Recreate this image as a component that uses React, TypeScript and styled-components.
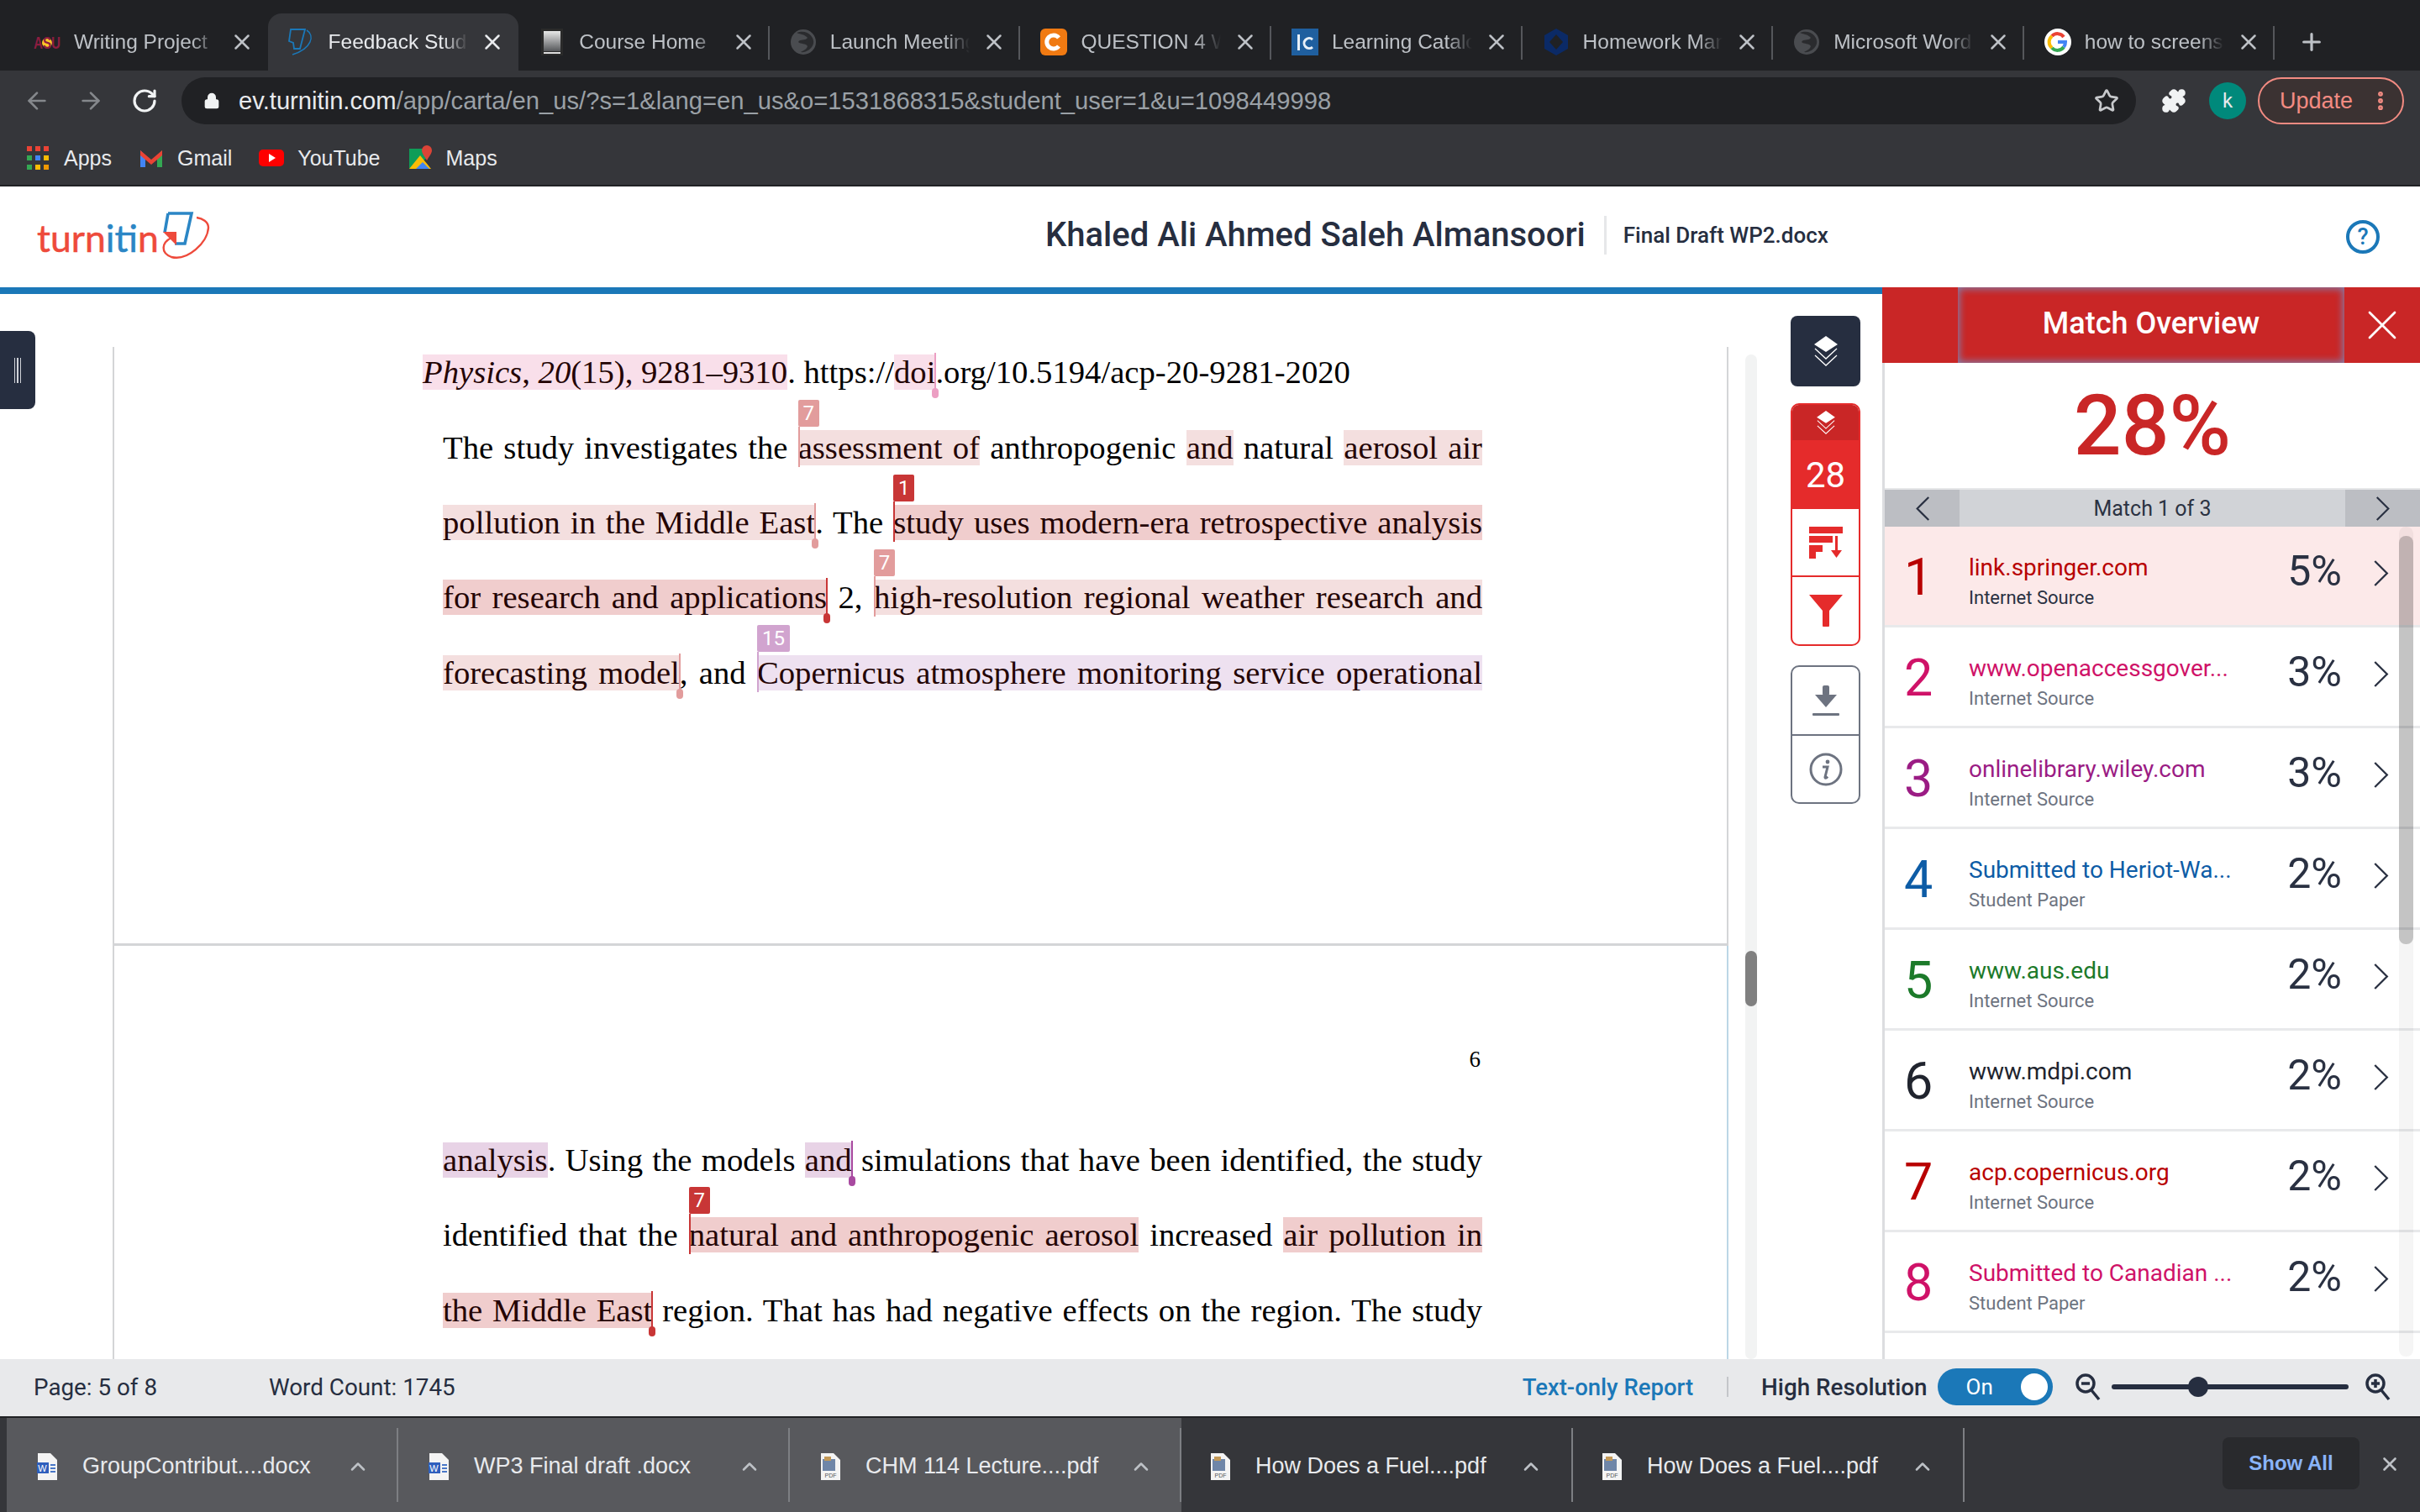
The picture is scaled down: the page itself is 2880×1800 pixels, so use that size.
import React from 'react';
import styled, { createGlobalStyle } from 'styled-components';
import { ChevronUp, Plus, RotateCw, ArrowLeft, ArrowRight, Star, Puzzle, X, Lock, EllipsisVertical } from 'lucide-react';

const GlobalStyle = createGlobalStyle`
    html, body {
        margin: 0;
        padding: 0;
        background: #fff;
    }

    * {
        box-sizing: border-box;
    }
`;

const StyledApp = styled.div`
    width: 2880px;
    height: 1800px;
    display: flex;
    flex-direction: column;
    overflow: hidden;
    font-family: Roboto, 'Liberation Sans', sans-serif;
`;

/* browser chrome */
const TabStrip = styled.div`
    height: 84px;
    padding: 16px 0 0 20px;
    display: flex;
    background: #202124;
`;

const StyledTab = styled.div<{ $active?: boolean; $sep?: boolean }>`
    position: relative;
    width: 298.6px;
    height: 68px;
    padding: 0 16px 0 24px;
    display: flex;
    align-items: center;
    color: ${(p) => (p.$active ? '#e8eaed' : '#bdc1c6')};
    background: ${(p) => (p.$active ? '#35363a' : 'transparent')};
    border-radius: 16px 16px 0 0;

    &:first-child {
        padding-left: 20px;
    }

    &::after {
        content: '';
        display: ${(p) => (p.$sep ? 'block' : 'none')};
        position: absolute;
        right: 0;
        top: 15px;
        width: 2px;
        height: 40px;
        background: #55575b;
    }
`;

const Favicon = styled.svg`
    flex: none;
    width: 32px;
    height: 32px;
    margin-right: 16px;
`;

const TabTitle = styled.span`
    flex: 1;
    margin-right: 14px;
    overflow: hidden;
    white-space: nowrap;
    font-family: 'Liberation Sans', sans-serif;
    font-size: 24.5px;
    mask-image: linear-gradient(90deg, #000 82%, transparent 100%);
`;

const NewTab = styled.div`
    margin: 0 0 0 28px;
    height: 68px;
    display: flex;
    align-items: center;
    color: #bdc1c6;
`;

const Toolbar = styled.div`
    height: 82px;
    padding: 8px 17px 0 28px;
    display: flex;
    align-items: flex-start;
    background: #35363a;
    color: #d6d8da;
`;

const NavIcons = styled.div`
    width: 188px;
    height: 56px;
    display: flex;
    align-items: center;
    gap: 32px;
`;

const Omnibox = styled.div`
    width: 2326px;
    height: 56px;
    padding: 0 20px 0 26px;
    display: flex;
    align-items: center;
    background: #202124;
    border-radius: 28px;
`;

const Url = styled.div`
    flex: 1;
    margin-left: 22px;
    font-family: 'Liberation Sans', sans-serif;
    font-size: 29.2px;
    white-space: nowrap;
    color: #9aa0a6;

    b {
        font-weight: 400;
        color: #e8eaed;
    }
`;

const ToolbarRight = styled.div`
    flex: 1;
    height: 56px;
    padding-left: 30px;
    display: flex;
    align-items: center;
`;

const Avatar = styled.div`
    width: 44px;
    height: 44px;
    margin: 0 14px 0 27px;
    display: flex;
    align-items: center;
    justify-content: center;
    flex: none;
    font-size: 24px;
    color: #e8eaed;
    background: #00897b;
    border-radius: 50%;
`;

const UpdatePill = styled.div`
    flex: none;
    width: 174px;
    height: 56px;
    padding: 0 12px 0 24px;
    display: flex;
    align-items: center;
    justify-content: space-between;
    font-family: 'Liberation Sans', sans-serif;
    font-size: 27px;
    color: #f28b82;
    background: #3b3232;
    border: 2px solid #f28b82;
    border-radius: 28px;
`;

const Bookmarks = styled.div`
    height: 56px;
    padding: 0 0 10px 30px;
    display: flex;
    align-items: center;
    background: #35363a;
    border-bottom: 2px solid #202124;
`;

const Bookmark = styled.div`
    margin-right: 32px;
    display: flex;
    align-items: center;
    gap: 16px;
    font-family: 'Liberation Sans', sans-serif;
    font-size: 25px;
    color: #e8eaed;
`;

const BookmarkIcon = styled.svg`
    width: 30px;
    height: 30px;
    flex: none;
`;

/* turnitin header */
const Header = styled.header`
    position: relative;
    height: 120px;
    padding: 0 44px;
    display: flex;
    align-items: center;
    justify-content: space-between;
    background: #fff;
`;

const Logo = styled.div`
    display: flex;
    align-items: center;
    font-family: Lato, sans-serif;
    font-size: 44.5px;
    color: #ee4a3b;
    -webkit-text-stroke: 0.5px #ee4a3b;

    em {
        font-style: normal;
        color: #2b86c5;
        -webkit-text-stroke: 0.5px #2b86c5;
    }

    svg {
        width: 60px;
        height: 62px;
        margin: -4px 0 0 2px;
        flex: none;
    }
`;

const HeaderCenter = styled.div`
    position: absolute;
    left: 1244px;
    top: 34px;
    display: flex;
    align-items: center;
    color: #262e40;
`;

const StudentName = styled.div`
    font-size: 40px;
    font-weight: 500;
    white-space: nowrap;
`;

const FileName = styled.div`
    margin-left: 22px;
    padding-left: 20px;
    font-size: 26px;
    font-weight: 500;
    line-height: 46px;
    white-space: nowrap;
    border-left: 3px solid #e6e7e9;
`;

const HelpIcon = styled.div`
    width: 40px;
    height: 40px;
    margin-right: 4px;
    display: flex;
    align-items: center;
    justify-content: center;
    font-size: 27px;
    font-weight: 500;
    color: #1b78b8;
    border: 4px solid #1b78b8;
    border-radius: 50%;
`;

/* document area */
const Main = styled.main`
    position: relative;
    height: 1276px;
    display: flex;
`;

const DocColumn = styled.div`
    position: relative;
    width: 2240px;
    padding-left: 134px;
    display: flex;
    border-top: 8px solid #1b78b8;
`;

const Handle = styled.div`
    position: absolute;
    left: 0;
    top: 44px;
    width: 42px;
    height: 93px;
    display: flex;
    align-items: center;
    justify-content: center;
    gap: 2px;
    background: #262e40;
    border-radius: 0 8px 8px 0;

    i {
        width: 1.5px;
        height: 30px;
        background: #cfd2d8;
    }
`;

const Pages = styled.div`
    width: 1923px;
    padding-top: 63px;
    overflow: hidden;
`;

const Page = styled.div<{ $second?: boolean }>`
    height: ${(p) => (p.$second ? '600px' : '713px')};
    padding-left: 391px;
    border-left: 2px solid #d4d5d7;
    border-right: 2px solid ${(p) => (p.$second ? '#bcd6e6' : '#d4d5d7')};
    border-bottom: ${(p) => (p.$second ? '0' : '3px solid #d4d5d7')};
    font-family: 'Liberation Serif', serif;
    font-size: 38.7px;
    color: #000;
`;

const Line = styled.div`
    width: 1237px;
    height: 89.3px;
    line-height: 89.3px;
    text-align: justify;
    text-align-last: justify;
    white-space: nowrap;
`;

const CiteLine = styled.div`
    height: 75.75px;
    margin-left: -24px;
    line-height: 61px;
    white-space: nowrap;
`;

const PageNumber = styled.div`
    width: 1237px;
    padding: 117px 2px 0 0;
    height: 211px;
    text-align: right;
    font-size: 27px;
    line-height: 36px;
`;

const toneColors: Record<string, string> = {
    pink: '#f9dfea',
    light: '#f4dfdf',
    dark: '#f0cdcd',
    lilac: '#eee1f0',
    purple: '#e8d3e6',
};

const Hl = styled.span<{ $tone: string }>`
    position: relative;
    color: #240404;
    background: ${(p) => toneColors[p.$tone]};
`;

const Badge = styled.span<{ $color: string; $wide?: boolean }>`
    position: absolute;
    left: 0;
    bottom: calc(100% + 4px);
    width: ${(p) => (p.$wide ? '39px' : '25px')};
    height: 32px;
    font-family: Roboto, sans-serif;
    font-size: 24px;
    line-height: 32px;
    text-align: center;
    text-align-last: center;
    color: #fff;
    background: ${(p) => p.$color};
    border-radius: 2px;
`;

const StartRule = styled.span<{ $color: string }>`
    position: absolute;
    left: 0;
    top: -4px;
    bottom: -2px;
    width: 2px;
    background: ${(p) => p.$color};
`;

const EndRule = styled.span<{ $color: string }>`
    position: absolute;
    right: -1px;
    top: -2px;
    bottom: -2px;
    width: 2px;
    background: ${(p) => p.$color};

    &::after {
        content: '';
        position: absolute;
        left: -3px;
        bottom: -8px;
        width: 8px;
        height: 12px;
        background: ${(p) => p.$color};
        border-radius: 4px;
    }
`;

const Scrollbar = styled.div`
    width: 14px;
    margin-left: 20px;
    margin-top: 72px;
    padding-top: 710px;
    background: #f2f3f3;
    border-radius: 7px;

    i {
        display: block;
        height: 66px;
        background: #808080;
        border-radius: 7px;
    }
`;

const ToolColumn = styled.div`
    width: 83px;
    margin: 26px 0 0 40px;
    display: flex;
    flex-direction: column;
    gap: 20px;
`;

const ToolButton = styled.div`
    height: 84px;
    display: flex;
    align-items: center;
    justify-content: center;
    color: #fff;
    background: #262e40;
    border-radius: 8px;
`;

const ToolGroup = styled.div<{ $color: string; $gap?: number }>`
    margin-top: ${(p) => p.$gap ?? 0}px;
    display: flex;
    flex-direction: column;
    overflow: hidden;
    background: #fff;
    border: 2px solid ${(p) => p.$color};
    border-radius: 10px;
`;

const ToolCell = styled.div<{ $h: number; $bg?: string; $line?: string }>`
    height: ${(p) => p.$h}px;
    display: flex;
    align-items: center;
    justify-content: center;
    font-size: 42px;
    color: #fff;
    background: ${(p) => p.$bg ?? 'transparent'};
    border-bottom: ${(p) => (p.$line ? `2px solid ${p.$line}` : '0')};
`;

/* match panel */
const Panel = styled.aside`
    width: 640px;
    display: flex;
    flex-direction: column;
    position: relative;
    border-left: 3px solid #dcdde0;
`;

const PanelHead = styled.div`
    height: 90px;
    margin-left: -3px;
    display: flex;
    background: #c92626;
`;

const PanelTitle = styled.div`
    width: 460px;
    margin-left: 90px;
    padding-bottom: 4px;
    display: flex;
    align-items: center;
    justify-content: center;
    font-size: 36px;
    font-weight: 500;
    color: #fff;
    box-shadow: inset 0 0 8px 2px rgba(120, 140, 190, 0.85);
`;

const PanelClose = styled.div`
    flex: 1;
    display: flex;
    align-items: center;
    justify-content: center;
    color: #fff;
`;

const Score = styled.div`
    height: 149px;
    display: flex;
    align-items: center;
    justify-content: center;
    font-size: 100px;
    font-weight: 500;
    color: #c92626;
`;

const MatchBar = styled.div`
    height: 46px;
    display: flex;
    align-items: stretch;
    font-size: 25px;
    color: #2b3242;
    background: #d1d3d7;
    border-top: 2px solid #e6e7e9;
`;

const MatchArrow = styled.div`
    width: 89px;
    display: flex;
    align-items: center;
    justify-content: center;
    background: #bcbec3;
`;

const MatchLabel = styled.div`
    flex: 1;
    display: flex;
    align-items: center;
    justify-content: center;
`;

const Sources = styled.div`
    position: relative;
    flex: 1;
`;

const SourceRow = styled.div<{ $active?: boolean }>`
    height: 120px;
    padding: 0 0 0 23px;
    display: flex;
    align-items: center;
    background: ${(p) => (p.$active ? '#fce9e9' : '#fff')};
    border-bottom: 3px solid #e8e9eb;
`;

const SourceNumber = styled.div<{ $color: string }>`
    width: 77px;
    margin-top: 2px;
    font-size: 61px;
    line-height: 62px;
    color: ${(p) => p.$color};
`;

const SourceText = styled.div`
    width: 370px;
    margin-top: 13px;
    display: flex;
    flex-direction: column;
    gap: 5px;
`;

const SourceTitle = styled.div<{ $color: string }>`
    font-size: 28px;
    line-height: 34px;
    white-space: nowrap;
    color: ${(p) => p.$color};
`;

const SourceKind = styled.div<{ $dark?: boolean }>`
    font-size: 22px;
    line-height: 28px;
    color: ${(p) => (p.$dark ? '#2a3142' : '#6d7380')};
`;

const SourcePercent = styled.div`
    width: 74px;
    margin-top: -12px;
    text-align: right;
    font-size: 50px;
    color: #2a3142;
`;

const SourceChevron = styled.div`
    margin: -6px 0 0 38px;
    display: flex;
`;

const SourcesTrack = styled.div`
    position: absolute;
    right: 8px;
    top: 0;
    bottom: 3px;
    width: 17px;
    padding-top: 11px;
    background: rgba(0, 0, 0, 0.04);
    border-radius: 8px;

    i {
        display: block;
        height: 486px;
        background: rgba(0, 0, 0, 0.2);
        border-radius: 8px;
    }
`;

/* status bar */
const StatusBar = styled.div`
    height: 70px;
    padding: 0 0 2px 40px;
    display: flex;
    align-items: center;
    font-size: 27.8px;
    color: #262e40;
    background: #e8e9eb;
    border-bottom: 2px solid #202124;
`;

const PageCount = styled.div`
    width: 280px;
`;

const ReportLink = styled.div`
    margin-left: 1270px;
    font-size: 27.5px;
    font-weight: 500;
    color: #1b78b8;
`;

const StatusDivider = styled.div`
    width: 2px;
    height: 24px;
    margin: 0 39px 0 40px;
    background: #c4c6ca;
`;

const ResolutionLabel = styled.div`
    margin-right: 12px;
    font-weight: 500;
`;

const Toggle = styled.div`
    width: 137px;
    height: 44px;
    padding: 0 6px 0 34px;
    display: flex;
    align-items: center;
    justify-content: space-between;
    font-size: 26px;
    color: #fff;
    background: #1b78b8;
    border-radius: 22px;

    i {
        width: 32px;
        height: 32px;
        background: #fff;
        border-radius: 50%;
    }
`;

const ZoomControl = styled.div`
    margin-left: 26px;
    display: flex;
    align-items: center;
    gap: 12px;

    svg:last-child {
        margin-left: 7px;
    }
`;

const Slider = styled.div`
    position: relative;
    width: 282px;
    height: 6px;
    background: #262e40;
    border-radius: 3px;

    i {
        position: absolute;
        left: 91px;
        top: -9px;
        width: 24px;
        height: 24px;
        background: #262e40;
        border-radius: 50%;
    }
`;

/* downloads */
const DownloadBar = styled.div`
    flex: 1;
    position: relative;
    display: flex;
    background: #35363a;
`;

const Lit = styled.div`
    padding-left: 8px;
    display: flex;
    background: linear-gradient(90deg, #35363a 8px, #58595d 8px);
`;

const DownloadItem = styled.div<{ $last?: boolean }>`
    position: relative;
    width: 466px;
    height: 112px;
    padding: 3px 0 0 ${(p) => (p.$last ? '34px' : '36px')};
    display: flex;
    align-items: center;
    font-family: 'Liberation Sans', sans-serif;
    font-size: 27px;
    color: #e8eaed;

    &::after {
        content: '';
        position: absolute;
        right: 0;
        top: 12px;
        width: 2px;
        height: 88px;
        background: #7d7f83;
    }
`;

const FileIcon = styled.svg`
    flex: none;
    width: 26px;
    height: 32px;
    margin-right: 28px;
`;

const DownloadName = styled.span`
    width: 314px;
    white-space: nowrap;
`;

const ShowAll = styled.div`
    position: absolute;
    left: 2645px;
    top: 23px;
    width: 163px;
    height: 62px;
    display: flex;
    align-items: center;
    justify-content: center;
    font-family: 'Liberation Sans', sans-serif;
    font-size: 24px;
    font-weight: 700;
    color: #8ab4f8;
    background: #292a2d;
    border-radius: 8px;
`;

const DownloadClose = styled.div`
    position: absolute;
    left: 2831px;
    top: 42px;
    display: flex;
    color: #bdc1c6;
`;

const LayersIcon: React.FC<{ w: number; h: number }> = ({ w, h }) => (
    <svg width={w} height={h} viewBox="0 0 28 36" fill="none" stroke="#fff" strokeWidth="1.3">
        <path d="M14 0 L28 10 L14 19 L0 10 Z" fill="#fff" stroke="none" />
        <path d="M1 15 L14 27 L27 15" />
        <path d="M1 23 L14 35 L27 23" />
    </svg>
);

const Chevron: React.FC<{ left?: boolean; h?: number }> = ({ left, h = 31 }) => (
    <svg width="18" height={h} viewBox="0 0 18 32" fill="none" stroke="#2a3142" strokeWidth="2.4">
        <path d={left ? 'M17 1 L2 16 L17 31' : 'M1 1 L16 16 L1 31'} />
    </svg>
);

const Globe = () => (
    <Favicon viewBox="0 0 32 32">
        <circle cx="16" cy="16" r="15" fill="#4a4c50" />
        <path d="M8 5c5 2 10 2 13 6-3 4-9 1-11 5 3 3 9 1 11 5-1 4-5 5-8 7 5 1 13-3 15-10C30 10 20 0 8 5z" fill="#2a2b2e" />
    </Favicon>
);

const FileDoc: React.FC<{ pdf?: boolean }> = ({ pdf }) => (
    <FileIcon viewBox="0 0 26 32">
        <path d="M1 0h15l8 8v24H1z" fill="#f4f4f4" />
        {pdf ? (
            <>
                <rect x="3" y="7" width="15" height="14" fill="#6f86a8" />
                <rect x="5" y="4" width="8" height="5" fill="#c49a58" />
                <text x="12.5" y="29" fontSize="7" fontFamily="Liberation Sans" textAnchor="middle" fill="#555">
                    PDF
                </text>
            </>
        ) : (
            <>
                <rect x="-1" y="11" width="15" height="13" fill="#2f5fbd" />
                <text x="6.5" y="22" fontSize="11" fontFamily="Liberation Sans" textAnchor="middle" fill="#fff">
                    W
                </text>
                <rect x="16" y="13" width="6" height="2" fill="#4a78c8" />
                <rect x="16" y="17" width="6" height="2" fill="#4a78c8" />
                <rect x="16" y="21" width="6" height="2" fill="#4a78c8" />
            </>
        )}
    </FileIcon>
);

const tabs = [
    {
        title: 'Writing Project',
        icon: (
            <Favicon viewBox="0 0 32 32">
                <circle cx="16" cy="17" r="6" fill="#ffc627" />
                <text x="0" y="24" fontSize="20" fontWeight="700" fontFamily="Liberation Sans" textLength="32" lengthAdjust="spacingAndGlyphs" fill="#8c1d40">
                    ASU
                </text>
            </Favicon>
        ),
    },
    {
        title: 'Feedback Studio',
        active: true,
        icon: (
            <Favicon viewBox="0 0 32 32" fill="none" stroke="#1b78b8" strokeWidth="1.8">
                <path d="M3 1h17l-6 23H7l-1-7-5-2z" />
                <path d="M22 2c10 6 6 22-17 29" strokeWidth="1.5" />
            </Favicon>
        ),
    },
    {
        title: 'Course Home',
        sep: true,
        icon: (
            <Favicon viewBox="0 0 32 32">
                <defs>
                    <linearGradient id="book" x1="0" x2="0" y1="0" y2="1">
                        <stop offset="0" stopColor="#e8e8e8" />
                        <stop offset="1" stopColor="#55575a" />
                    </linearGradient>
                </defs>
                <rect x="3" width="26" height="32" fill="#2a2a2a" />
                <rect x="6" y="3" width="20" height="24" fill="url(#book)" />
                <rect x="6" y="28" width="20" height="2" fill="#dedede" />
            </Favicon>
        ),
    },
    { title: 'Launch Meeting', sep: true, icon: <Globe /> },
    {
        title: 'QUESTION 4 WP',
        sep: true,
        icon: (
            <Favicon viewBox="0 0 32 32">
                <rect width="32" height="32" rx="6" fill="#f07a12" />
                <path d="M22 11a8 8 0 1 0 0 10" fill="none" stroke="#fff" strokeWidth="5" />
            </Favicon>
        ),
    },
    {
        title: 'Learning Catalog',
        sep: true,
        icon: (
            <Favicon viewBox="0 0 32 32">
                <rect width="32" height="32" fill="#1f5f9f" />
                <rect x="7" y="7" width="3" height="19" fill="#e8f0f8" />
                <path d="M25 13a6 6 0 1 0 0 9" fill="none" stroke="#e8f0f8" strokeWidth="3" />
            </Favicon>
        ),
    },
    {
        title: 'Homework Man',
        sep: true,
        icon: (
            <Favicon viewBox="0 0 32 32">
                <path d="M16 0 30 8v16L16 32 2 24V8z" fill="#0b2a66" />
                <path d="M16 7 24 16 16 25 8 16z" fill="#202124" />
            </Favicon>
        ),
    },
    { title: 'Microsoft Word', sep: true, icon: <Globe /> },
    {
        title: 'how to screensh',
        sep: true,
        icon: (
            <Favicon viewBox="0 0 32 32">
                <circle cx="16" cy="16" r="16" fill="#fff" />
                <path d="M23 10a9 9 0 0 0-14-1" fill="none" stroke="#ea4335" strokeWidth="4" />
                <path d="M9 9a9 9 0 0 0 0 14" fill="none" stroke="#fbbc05" strokeWidth="4" />
                <path d="M9 23a9 9 0 0 0 14-1" fill="none" stroke="#34a853" strokeWidth="4" />
                <path d="M16 16h9a9 9 0 0 1-2 6" fill="none" stroke="#4285f4" strokeWidth="4" />
            </Favicon>
        ),
    },
];

const sources = [
    { title: 'link.springer.com', kind: 'Internet Source', pct: '5%', color: '#b80000' },
    { title: 'www.openaccessgover...', kind: 'Internet Source', pct: '3%', color: '#cf1268' },
    { title: 'onlinelibrary.wiley.com', kind: 'Internet Source', pct: '3%', color: '#9b1c84' },
    { title: 'Submitted to Heriot-Wa...', kind: 'Student Paper', pct: '2%', color: '#0d5ca6' },
    { title: 'www.aus.edu', kind: 'Internet Source', pct: '2%', color: '#1c7a2a' },
    { title: 'www.mdpi.com', kind: 'Internet Source', pct: '2%', color: '#20242e' },
    { title: 'acp.copernicus.org', kind: 'Internet Source', pct: '2%', color: '#b80000' },
    { title: 'Submitted to Canadian ...', kind: 'Student Paper', pct: '2%', color: '#cf1268' },
];

const downloads = [
    { name: 'GroupContribut....docx' },
    { name: 'WP3 Final draft .docx' },
    { name: 'CHM 114 Lecture....pdf', pdf: true },
];

const RED_SOFT = '#e29c9c';
const RED_HARD = '#c83636';

export default function App() {
    return (
        <StyledApp>
            <GlobalStyle />

            <TabStrip>
                {tabs.map((tab) => (
                    <StyledTab key={tab.title} $active={tab.active} $sep={tab.sep}>
                        {tab.icon}
                        <TabTitle>{tab.title}</TabTitle>
                        <X size={30} strokeWidth={2} />
                    </StyledTab>
                ))}
                <NewTab>
                    <Plus size={32} strokeWidth={2.4} />
                </NewTab>
            </TabStrip>

            <Toolbar>
                <NavIcons>
                    <ArrowLeft size={32} color="#85888c" strokeWidth={2} />
                    <ArrowRight size={32} color="#85888c" strokeWidth={2} />
                    <RotateCw size={32} color="#f1f3f4" strokeWidth={2.4} />
                </NavIcons>
                <Omnibox>
                    <Lock size={20} color="#f1f3f4" fill="#f1f3f4" />
                    <Url>
                        <b>ev.turnitin.com</b>/app/carta/en_us/?s=1&amp;lang=en_us&amp;o=1531868315&amp;student_user=1&amp;u=1098449998
                    </Url>
                    <Star size={30} color="#c7c9cc" strokeWidth={2.2} />
                </Omnibox>
                <ToolbarRight>
                    <Puzzle size={30} color="#f1f3f4" fill="#f1f3f4" />
                    <Avatar>k</Avatar>
                    <UpdatePill>
                        Update
                        <EllipsisVertical size={28} strokeWidth={3} />
                    </UpdatePill>
                </ToolbarRight>
            </Toolbar>

            <Bookmarks>
                <Bookmark>
                    <BookmarkIcon viewBox="0 0 30 30">
                        <rect x="2" y="1" width="6" height="6" fill="#ea4335" />
                        <rect x="12" y="1" width="6" height="6" fill="#ea4335" />
                        <rect x="22" y="1" width="6" height="6" fill="#ea4335" />
                        <rect x="2" y="12" width="6" height="6" fill="#34a853" />
                        <rect x="12" y="12" width="6" height="6" fill="#4285f4" />
                        <rect x="22" y="12" width="6" height="6" fill="#fbbc05" />
                        <rect x="2" y="23" width="6" height="6" fill="#34a853" />
                        <rect x="12" y="23" width="6" height="6" fill="#fbbc05" />
                        <rect x="22" y="23" width="6" height="6" fill="#f29900" />
                    </BookmarkIcon>
                    Apps
                </Bookmark>
                <Bookmark>
                    <BookmarkIcon viewBox="0 0 30 30">
                        <path d="M2 6v20h6V12z" fill="#4285f4" />
                        <path d="M28 6v20h-6V12z" fill="#34a853" />
                        <path d="M2 6l13 11L28 6v6L15 23 2 12z" fill="#ea4335" />
                    </BookmarkIcon>
                    Gmail
                </Bookmark>
                <Bookmark>
                    <BookmarkIcon viewBox="0 0 30 30">
                        <rect y="5" width="30" height="20" rx="5" fill="#f00" />
                        <path d="M12 10l8 5-8 5z" fill="#fff" />
                    </BookmarkIcon>
                    YouTube
                </Bookmark>
                <Bookmark>
                    <BookmarkIcon viewBox="0 0 30 30">
                        <path d="M2 4h20v12L2 28z" fill="#0f9d58" />
                        <path d="M2 28 15 12l13 16z" fill="#fbbc05" />
                        <path d="M10 28l8-8 8 8z" fill="#4285f4" />
                        <path d="M23 0a6 6 0 0 1 6 6c0 4-4 8-6 12-2-4-6-8-6-12a6 6 0 0 1 6-6z" fill="#db4437" />
                    </BookmarkIcon>
                    Maps
                </Bookmark>
            </Bookmarks>

            <Header>
                <Logo>
                    <span>
                        turn<em>it</em>in
                    </span>
                    <svg viewBox="190 250 60 62" fill="none">
                        <path d="M199 255 H227 L219 291 H207 M199 255 L195 278" stroke="#2b86c5" strokeWidth="3.6" />
                        <path d="M193 277 H209 V293 Z" fill="#ee4a3b" />
                        <path d="M203 284 C191 290 190 302 203 307 C222 312 246 290 247 272 C247 265 240 261 233 260" stroke="#ee4a3b" strokeWidth="2.4" />
                    </svg>
                </Logo>
                <HeaderCenter>
                    <StudentName>Khaled Ali Ahmed Saleh Almansoori</StudentName>
                    <FileName>Final Draft WP2.docx</FileName>
                </HeaderCenter>
                <HelpIcon>?</HelpIcon>
            </Header>

            <Main>
                <DocColumn>
                    <Handle>
                        <i />
                        <i />
                        <i />
                    </Handle>

                    <Pages>
                        <Page>
                            <CiteLine>
                                <Hl $tone="pink">
                                    <i>Physics</i>, <i>20</i>(15), 9281–9310
                                </Hl>
                                . https://
                                <Hl $tone="pink">
                                    doi
                                    <EndRule $color="#ec9fc3" />
                                </Hl>
                                .org/10.5194/acp-20-9281-2020
                            </CiteLine>
                            <Line>
                                The study investigates the{' '}
                                <Hl $tone="light">
                                    <Badge $color={RED_SOFT}>7</Badge>
                                    <StartRule $color={RED_SOFT} />
                                    assessment of
                                </Hl>{' '}
                                anthropogenic <Hl $tone="light">and</Hl> natural <Hl $tone="light">aerosol air</Hl>
                            </Line>
                            <Line>
                                <Hl $tone="light">
                                    pollution in the Middle East
                                    <EndRule $color={RED_SOFT} />
                                </Hl>
                                . The{' '}
                                <Hl $tone="dark">
                                    <Badge $color={RED_HARD}>1</Badge>
                                    <StartRule $color={RED_HARD} />
                                    study uses modern-era retrospective analysis
                                </Hl>
                            </Line>
                            <Line>
                                <Hl $tone="dark">
                                    for research and applications
                                    <EndRule $color={RED_HARD} />
                                </Hl>{' '}
                                2,{' '}
                                <Hl $tone="light">
                                    <Badge $color={RED_SOFT}>7</Badge>
                                    <StartRule $color={RED_SOFT} />
                                    high-resolution regional weather research and
                                </Hl>
                            </Line>
                            <Line>
                                <Hl $tone="light">
                                    forecasting model
                                    <EndRule $color={RED_SOFT} />
                                </Hl>
                                , and{' '}
                                <Hl $tone="lilac">
                                    <Badge $color="#d1a4cf" $wide>
                                        15
                                    </Badge>
                                    <StartRule $color="#d1a4cf" />
                                    Copernicus atmosphere monitoring service operational
                                </Hl>
                            </Line>
                        </Page>

                        <Page $second>
                            <PageNumber>6</PageNumber>
                            <Line>
                                <Hl $tone="purple">analysis</Hl>. Using the models{' '}
                                <Hl $tone="purple">
                                    and
                                    <EndRule $color="#a84aa0" />
                                </Hl>{' '}
                                simulations that have been identified, the study
                            </Line>
                            <Line>
                                identified that the{' '}
                                <Hl $tone="dark">
                                    <Badge $color={RED_HARD}>7</Badge>
                                    <StartRule $color={RED_HARD} />
                                    natural and anthropogenic aerosol
                                </Hl>{' '}
                                increased <Hl $tone="dark">air pollution in</Hl>
                            </Line>
                            <Line>
                                <Hl $tone="dark">
                                    the Middle East
                                    <EndRule $color={RED_HARD} />
                                </Hl>{' '}
                                region. That has had negative effects on the region. The study
                            </Line>
                        </Page>
                    </Pages>

                    <Scrollbar>
                        <i />
                    </Scrollbar>

                    <ToolColumn>
                        <ToolButton>
                            <LayersIcon w={28} h={36} />
                        </ToolButton>
                        <ToolGroup $color="#e52b2b">
                            <ToolCell $h={42} $bg="#c92626">
                                <LayersIcon w={22} h={28} />
                            </ToolCell>
                            <ToolCell $h={82} $bg="#e52b2b">
                                28
                            </ToolCell>
                            <ToolCell $h={81} $line="#e52b2b">
                                <svg width="42" height="38" viewBox="0 0 42 38" fill="#e52b2b">
                                    <rect x="1" y="0" width="40" height="8" />
                                    <rect x="1" y="11" width="28" height="8" />
                                    <rect x="1" y="22" width="16" height="8" />
                                    <rect x="1" y="30" width="8" height="8" />
                                    <rect x="32" y="11" width="3" height="20" />
                                    <path d="M27 28h13l-6.5 9z" />
                                </svg>
                            </ToolCell>
                            <ToolCell $h={80}>
                                <svg width="42" height="38" viewBox="0 0 42 38" fill="#e52b2b">
                                    <path d="M1 0h40L25 19v17a4 4 0 0 1-8 0V19z" />
                                </svg>
                            </ToolCell>
                        </ToolGroup>
                        <ToolGroup $color="#6d7380" $gap={3}>
                            <ToolCell $h={82} $line="#6d7380">
                                <svg width="32" height="36" viewBox="0 0 32 36" fill="#6d7380">
                                    <rect x="12" y="0" width="8" height="12" rx="2" />
                                    <path d="M3 11h26L16 26z" />
                                    <rect x="0" y="33" width="32" height="3" rx="1" />
                                </svg>
                            </ToolCell>
                            <ToolCell $h={79}>
                                <svg width="40" height="40" viewBox="0 0 40 40" fill="none">
                                    <circle cx="20" cy="20" r="18" stroke="#6d7380" strokeWidth="3" />
                                    <circle cx="22" cy="11" r="2.4" fill="#6d7380" />
                                    <path d="M16 17h6l-3 12c-.3 1.5 1 2 3-.5" stroke="#6d7380" strokeWidth="3" />
                                </svg>
                            </ToolCell>
                        </ToolGroup>
                    </ToolColumn>
                </DocColumn>

                <Panel>
                    <PanelHead>
                        <PanelTitle>Match Overview</PanelTitle>
                        <PanelClose>
                            <X size={60} strokeWidth={1.1} />
                        </PanelClose>
                    </PanelHead>
                    <Score>28%</Score>
                    <MatchBar>
                        <MatchArrow>
                            <Chevron left h={29} />
                        </MatchArrow>
                        <MatchLabel>Match 1 of 3</MatchLabel>
                        <MatchArrow>
                            <Chevron h={29} />
                        </MatchArrow>
                    </MatchBar>
                    <Sources>
                        {sources.map((s, i) => (
                            <SourceRow key={s.title} $active={i === 0}>
                                <SourceNumber $color={s.color}>{i + 1}</SourceNumber>
                                <SourceText>
                                    <SourceTitle $color={s.color}>{s.title}</SourceTitle>
                                    <SourceKind $dark={i === 0}>{s.kind}</SourceKind>
                                </SourceText>
                                <SourcePercent>{s.pct}</SourcePercent>
                                <SourceChevron>
                                    <Chevron />
                                </SourceChevron>
                            </SourceRow>
                        ))}
                        <SourcesTrack>
                            <i />
                        </SourcesTrack>
                    </Sources>
                </Panel>
            </Main>

            <StatusBar>
                <PageCount>Page: 5 of 8</PageCount>
                <div>Word Count: 1745</div>
                <ReportLink>Text-only Report</ReportLink>
                <StatusDivider />
                <ResolutionLabel>High Resolution</ResolutionLabel>
                <Toggle>
                    On
                    <i />
                </Toggle>
                <ZoomControl>
                    <svg width="32" height="34" viewBox="0 0 32 34" fill="none" stroke="#262e40" strokeWidth="3.5">
                        <circle cx="13" cy="13" r="10" />
                        <path d="M20 21l9 11M8 13h10" />
                    </svg>
                    <Slider>
                        <i />
                    </Slider>
                    <svg width="32" height="34" viewBox="0 0 32 34" fill="none" stroke="#262e40" strokeWidth="3.5">
                        <circle cx="13" cy="13" r="10" />
                        <path d="M20 21l9 11M8 13h10M13 8v10" />
                    </svg>
                </ZoomControl>
            </StatusBar>

            <DownloadBar>
                <Lit>
                    {downloads.map((d) => (
                        <DownloadItem key={d.name}>
                            <FileDoc pdf={d.pdf} />
                            <DownloadName>{d.name}</DownloadName>
                            <ChevronUp size={28} color="#bdc1c6" strokeWidth={2.2} />
                        </DownloadItem>
                    ))}
                </Lit>
                <DownloadItem $last>
                    <FileDoc pdf />
                    <DownloadName>How Does a Fuel....pdf</DownloadName>
                    <ChevronUp size={28} color="#bdc1c6" strokeWidth={2.2} />
                </DownloadItem>
                <DownloadItem $last>
                    <FileDoc pdf />
                    <DownloadName>How Does a Fuel....pdf</DownloadName>
                    <ChevronUp size={28} color="#bdc1c6" strokeWidth={2.2} />
                </DownloadItem>
                <ShowAll>Show All</ShowAll>
                <DownloadClose>
                    <X size={26} strokeWidth={2.4} />
                </DownloadClose>
            </DownloadBar>
        </StyledApp>
    );
}
